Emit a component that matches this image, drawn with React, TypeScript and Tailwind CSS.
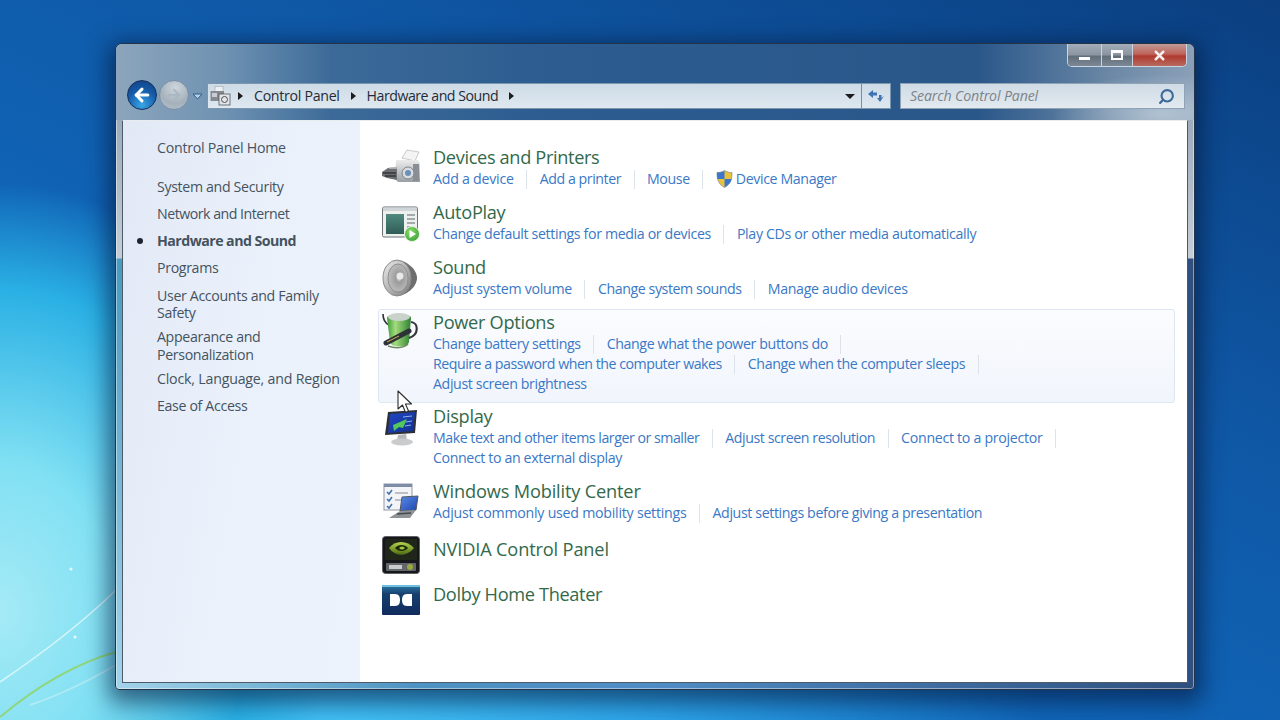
import { ArrowLeft, ArrowRight, Search, X } from "lucide-react";
import { ReactNode } from "react";

const sans = "font-['Open_Sans','Noto_Sans',sans-serif]";

function DevicesIcon() {
  return (
    <svg width="38" height="36" viewBox="0 0 38 36">
      <defs>
        <linearGradient id="dv1" x1="0" y1="0" x2="0" y2="1">
          <stop offset="0" stopColor="#ececec" />
          <stop offset="1" stopColor="#9a9fa4" />
        </linearGradient>
      </defs>
      <path d="M20 9 L25 1 L37 3 L33 12 Z" fill="#f4f4f4" stroke="#b5b5b5" strokeWidth="0.7" />
      <path d="M14 11 H36 L38 15 V33 H16 L13 30 Z" fill="url(#dv1)" />
      <rect x="31" y="15" width="6" height="17" fill="#8a8f95" />
      <circle cx="26" cy="24" r="6" fill="#d9dcdf" stroke="#80858a" />
      <circle cx="26" cy="24" r="3" fill="#6a8fb8" />
      <path d="M0 23 L6 19 L15 18 V31 L5 29 L0 27 Z" fill="#6c6f73" />
      <path d="M1 24 H14 M3 27 H14" stroke="#35383b" strokeWidth="1.4" />
      <path d="M7 19 H15" stroke="#c4c8cc" strokeWidth="1.4" />
    </svg>
  );
}

function AutoPlayIcon() {
  return (
    <svg width="38" height="36" viewBox="0 0 38 36">
      <defs>
        <linearGradient id="ap1" x1="0" y1="0" x2="0" y2="1">
          <stop offset="0" stopColor="#4f8a80" />
          <stop offset="1" stopColor="#2f5d55" />
        </linearGradient>
        <radialGradient id="ap2" cx="0.4" cy="0.35" r="0.8">
          <stop offset="0" stopColor="#8fdc6a" />
          <stop offset="1" stopColor="#2f9a33" />
        </radialGradient>
      </defs>
      <rect x="0.5" y="1" width="35" height="30" rx="1.5" fill="#eef0ee" stroke="#6d7377" />
      <path d="M1 1.5 H35 V5 H1 Z" fill="#cfd5d8" />
      <rect x="4" y="8" width="18" height="20" fill="url(#ap1)" />
      <path d="M25 9 H33 M25 13 H33 M25 17 H33 M25 21 H29" stroke="#8b9296" strokeWidth="1.6" />
      <circle cx="30" cy="28" r="7.5" fill="url(#ap2)" stroke="#e7f5de" />
      <path d="M27.5 24 L34 28 L27.5 32 Z" fill="#fff" />
    </svg>
  );
}

function SoundIcon() {
  return (
    <svg width="36" height="38" viewBox="0 0 36 38">
      <defs>
        <linearGradient id="sn1" x1="0" y1="0" x2="1" y2="1">
          <stop offset="0" stopColor="#eeeeee" />
          <stop offset="1" stopColor="#7c7c7c" />
        </linearGradient>
        <radialGradient id="sn2" cx="0.55" cy="0.5" r="0.6">
          <stop offset="0" stopColor="#f2f2f2" />
          <stop offset="0.25" stopColor="#9a9a9a" />
          <stop offset="1" stopColor="#c4c4c4" />
        </radialGradient>
      </defs>
      <path d="M14 1 C24 1 35 10 35 19 C35 28 24 37 14 37 Z" fill="#6e6e6e" />
      <ellipse cx="15" cy="19" rx="14" ry="18" fill="url(#sn1)" stroke="#8a8a8a" />
      <ellipse cx="16" cy="19" rx="10" ry="14" fill="url(#sn2)" stroke="#8f8f8f" />
      <circle cx="18" cy="17" r="3.5" fill="#e9e9e9" />
    </svg>
  );
}

function PowerIcon() {
  return (
    <svg width="37" height="39" viewBox="0 0 37 39">
      <defs>
        <linearGradient id="pw1" x1="0" y1="0" x2="1" y2="0">
          <stop offset="0" stopColor="#3f9a3c" />
          <stop offset="0.35" stopColor="#a3dc7c" />
          <stop offset="1" stopColor="#2f7f34" />
        </linearGradient>
      </defs>
      <path d="M1 3 C1 8 3 12 7 14" fill="none" stroke="#2f3336" strokeWidth="1.6" />
      <path d="M5 7 C5 2 29 2 29 7 L27 31 C26 37 9 37 8 31 Z" fill="url(#pw1)" />
      <ellipse cx="17" cy="6" rx="11" ry="4" fill="#c9d2cb" />
      <path d="M29 11 C37 12 37 24 27 27" fill="none" stroke="#34383b" strokeWidth="2.2" />
      <path d="M4 32 L27 20" stroke="#2e3236" strokeWidth="5" strokeLinecap="round" />
      <path d="M5 31 L17 25" stroke="#d0b060" strokeWidth="1" />
      <path d="M6 35 C14 38 22 37 26 33" fill="none" stroke="#6c8a5f" strokeWidth="1.4" />
    </svg>
  );
}

function DisplayIcon() {
  return (
    <svg width="33" height="37" viewBox="0 0 33 37">
      <defs>
        <linearGradient id="ds1" x1="0" y1="0" x2="1" y2="1">
          <stop offset="0" stopColor="#2146c4" />
          <stop offset="1" stopColor="#123090" />
        </linearGradient>
      </defs>
      <path d="M3 3 L32 1 L30 24 L0 26 Z" fill="#2c3036" />
      <path d="M5 5 L30 3 L28 22 L3 24 Z" fill="url(#ds1)" />
      <path d="M8 16 L22 10 L18 19 L14 18 L9 22 Z" fill="#53c85a" />
      <path d="M18 8 L27 7 M21 13 L27 12 M20 17 L26 16" stroke="#8eb2ec" strokeWidth="1" />
      <path d="M13 26 L21 25 L22 31 L12 31 Z" fill="#b6b9bc" />
      <ellipse cx="17" cy="33" rx="11" ry="3.5" fill="#c9cbcd" />
    </svg>
  );
}

function MobilityIcon() {
  return (
    <svg width="36" height="38" viewBox="0 0 36 38">
      <defs>
        <linearGradient id="mb1" x1="0" y1="0" x2="1" y2="1">
          <stop offset="0" stopColor="#5c8be6" />
          <stop offset="1" stopColor="#1c46b0" />
        </linearGradient>
      </defs>
      <rect x="1" y="2" width="28" height="26" fill="#f3f4f8" stroke="#9097a8" />
      <rect x="1" y="2" width="28" height="3" fill="#7e8ca8" />
      <path d="M4 10 L6 12 L9 8 M4 17 L6 19 L9 15 M4 24 L6 26 L9 22" fill="none" stroke="#3c6fb0" strokeWidth="1.5" />
      <path d="M12 11 H25 M12 18 H18" stroke="#a9afb8" strokeWidth="1.4" />
      <path d="M19 15 L35 14 L33 28 L17 29 Z" fill="url(#mb1)" stroke="#52565c" />
      <path d="M17 29 L33 28 L27 36 L6 36 Z" fill="#8f9397" />
      <path d="M14 32 L28 31" stroke="#46494c" strokeWidth="1.5" />
    </svg>
  );
}

function NvidiaIcon() {
  return (
    <svg width="38" height="38" viewBox="0 0 38 38">
      <defs>
        <linearGradient id="nv1" x1="0" y1="0" x2="0" y2="1">
          <stop offset="0" stopColor="#b5d64a" />
          <stop offset="1" stopColor="#4c6a12" />
        </linearGradient>
      </defs>
      <rect x="0.5" y="0.5" width="37" height="37" rx="3" fill="#15171a" stroke="#5d6064" />
      <rect x="3" y="3" width="32" height="21" fill="#20261a" />
      <path d="M7 12 C13 4 25 4 32 12 C25 21 13 21 7 12 Z" fill="url(#nv1)" />
      <path d="M13 12 C16 8 23 8 26 12 C23 16 16 16 13 12 Z" fill="#1e2a10" />
      <path d="M17 12 C19 10 21 10 23 12 C21 14 19 14 17 12 Z" fill="#a5c83c" />
      <rect x="4" y="27" width="30" height="8" rx="1" fill="#63676b" />
      <rect x="7" y="29" width="13" height="4" fill="#c9cccf" />
      <circle cx="28" cy="31" r="3" fill="#9aa83f" />
    </svg>
  );
}

function DolbyIcon() {
  return (
    <svg width="38" height="30" viewBox="0 0 38 30">
      <defs>
        <linearGradient id="db1" x1="0" y1="0" x2="0" y2="1">
          <stop offset="0" stopColor="#2f79a8" />
          <stop offset="0.3" stopColor="#17406f" />
          <stop offset="1" stopColor="#102a5c" />
        </linearGradient>
      </defs>
      <rect width="38" height="30" rx="1" fill="url(#db1)" />
      <path d="M0 0 H38 V2 H0 Z" fill="#6fc0dc" />
      <path d="M8 9 H13 C17 9 18 12 18 15 C18 18 17 21 13 21 H8 Z" fill="#fff" />
      <path d="M30 9 H25 C21 9 20 12 20 15 C20 18 21 21 25 21 H30 Z" fill="#fff" />
    </svg>
  );
}

function ShieldIcon() {
  return (
    <svg width="17" height="18" viewBox="0 0 17 18">
      <path d="M8.5 0.5 C11 2 13.5 2.6 16 2.6 C16 9 15 14 8.5 17.5 C2 14 1 9 1 2.6 C3.5 2.6 6 2 8.5 0.5 Z" fill="#e8c33a" stroke="#6c7a96" strokeWidth="0.6" />
      <path d="M8.5 1 V9 H1.4 C1.2 7 1 5 1 2.6 C3.5 2.6 6 2 8.5 1 Z" fill="#3c76cc" />
      <path d="M8.5 9 V17.2 C12.5 15 15 12.5 15.6 9 Z" fill="#3c76cc" />
    </svg>
  );
}

function ExplorerIcon() {
  return (
    <svg width="22" height="20" viewBox="0 0 22 20">
      <rect x="5" y="0.5" width="8" height="7" fill="#eef1f4" stroke="#a9b0b8" strokeWidth="0.7" />
      <path d="M0.5 5 H14 V15 H0.5 Z" fill="#858a90" />
      <rect x="2" y="7" width="5" height="4" fill="#c9cdd2" />
      <rect x="9" y="8" width="11" height="11" fill="#e3e6e9" stroke="#54585c" strokeWidth="0.8" />
      <circle cx="14.5" cy="13.5" r="3" fill="none" stroke="#4c5054" strokeWidth="1" />
    </svg>
  );
}

function Caret() {
  return <span className="block h-0 w-0 border-y-[4px] border-l-[5px] border-y-transparent border-l-[#1c1c1c]" />;
}

function Cursor() {
  return (
    <svg className="absolute left-[397px] top-[390px]" width="17" height="24" viewBox="0 0 17 24">
      <path d="M1 1 V19 L5.5 15 L8.5 22.5 L11.5 21 L8.5 14 L14.5 14 Z" fill="#fff" stroke="#2c2c2c" strokeWidth="1.1" strokeLinejoin="round" />
    </svg>
  );
}

function Wallpaper() {
  return (
    <svg className="absolute inset-0" width="1280" height="720" viewBox="0 0 1280 720">
      <path d="M0 682 C40 655 80 625 116 590" fill="none" stroke="#e4f9fb" strokeWidth="1.6" opacity="0.8" />
      <path d="M0 717 C30 692 70 665 116 652" fill="none" stroke="#8fd67e" strokeWidth="2" />
      <path d="M30 705 C60 695 90 680 116 665" fill="none" stroke="#d5f3f5" strokeWidth="2" opacity="0.5" />
      <circle cx="71" cy="569" r="1.5" fill="#fff" opacity="0.8" />
      <circle cx="75" cy="637" r="1.5" fill="#fff" opacity="0.8" />
    </svg>
  );
}

function Sep() {
  return <span className="mx-[12.5px] h-[19px] w-px bg-[#dde3ea]" />;
}

type Link = string | [ReactNode, string];

function LinkRow({ links, trailing }: { links: Link[]; trailing?: boolean }) {
  return (
    <div className="flex h-[20px] items-center whitespace-nowrap text-[14.2px] leading-[20px] text-[#3a78c6]">
      {links.map((l, i) => (
        <div key={i} className="flex items-center">
          {i > 0 && <Sep />}
          {typeof l === "string" ? (
            <span className="tracking-[-0.38px]">{l}</span>
          ) : (
            <span className={`flex items-center ${l[1]}`}>{l[0]}</span>
          )}
        </div>
      ))}
      {trailing && <Sep />}
    </div>
  );
}

function Item({
  icon,
  title,
  titleClass = "tracking-[-0.3px]",
  rows,
  className,
  iconClass,
}: {
  icon: ReactNode;
  title: string;
  titleClass?: string;
  rows?: ReactNode;
  className: string;
  iconClass: string;
}) {
  return (
    <div className={`flex rounded-[3px] border px-[3px] pt-[1px] ${className}`}>
      <div className={`w-[51px] shrink-0 ${iconClass}`}>{icon}</div>
      <div>
        <div className={`h-[23px] whitespace-nowrap text-[18.2px] leading-[22px] text-[#33694b] ${titleClass}`}>{title}</div>
        {rows}
      </div>
    </div>
  );
}

const sideItem = "text-[14.2px] leading-[17.5px] text-[#45535f]";

export default function App() {
  return (
    <div className={`relative h-[720px] w-[1280px] overflow-hidden bg-[radial-gradient(ellipse_330px_430px_at_0%_85%,#a5eaf6_0%,#80e0f3_35%,#2ab0e4_75%,transparent_100%),radial-gradient(ellipse_720px_420px_at_25%_105%,#46c6f7_0%,#2ea6ea_45%,transparent_100%),linear-gradient(205deg,#0b3f80_0%,#0f58a6_35%,#1068bc_70%,#1272c4_100%)] pl-[115px] pt-[43px] ${sans}`}>
      <Wallpaper />

      {/* window */}
      <div className="relative flex h-[647px] w-[1080px] flex-col rounded-t-[7px] rounded-b-[4px] border border-[#23344a] bg-[linear-gradient(180deg,#8599ab_0px,#c4ced7_214px,transparent_215px),radial-gradient(ellipse_300px_420px_at_0%_100%,rgba(185,225,245,0.8)_0%,transparent_100%),linear-gradient(90deg,#4a9bc0_0%,#4f8cc6_50%,#2e4f7f_100%)] shadow-[0_6px_22px_7px_rgba(5,25,60,0.6),inset_0_0_0_1px_rgba(255,255,255,0.45)]">
        <div className="rounded-t-[6px] bg-[radial-gradient(ellipse_110px_40px_at_97%_92%,rgba(190,205,218,0.8)_0%,transparent_100%),linear-gradient(90deg,#8ca5bc_0%,#6f92b2_10%,#3c6a98_20%,#2c5c90_40%,#2a578a_80%,#6a87a5_92%,#8ba0b8_100%)]">
          {/* caption buttons */}
          <div className="flex h-[23px] justify-end pr-[7px]">
            <div className="flex h-[23px] overflow-hidden rounded-b-[5px] border border-t-0 border-[#c9d6e2]">
              <div className="flex w-[33px] items-center justify-center bg-[linear-gradient(180deg,#a3aebb_0%,#8b949f_50%,#626d7a_55%,#7d8896_100%)]">
                <span className="mt-[7px] h-[3px] w-[11px] bg-white" />
              </div>
              <div className="flex w-[31px] items-center justify-center border-l border-[#c9d6e2] bg-[linear-gradient(180deg,#a3aebb_0%,#8b949f_50%,#626d7a_55%,#7d8896_100%)]">
                <span className="h-[10px] w-[12px] border-2 border-t-[3px] border-white" />
              </div>
              <div className="flex w-[54px] items-center justify-center border-l border-[#c9d6e2] bg-[linear-gradient(180deg,#c09a96_0%,#c0645c_45%,#b03a30_55%,#b86a5e_100%)]">
                <X size={15} strokeWidth={4} color="#f1eeee" />
              </div>
            </div>
          </div>

          {/* nav row */}
          <div className="flex h-[53px] items-start pl-[11px] pr-[9px] pt-[16px]">
            <div className="-mt-[3px] flex h-[30px] w-[30px] items-center justify-center rounded-full border border-[#16305c] bg-[radial-gradient(circle_at_50%_85%,#39a6e6_0%,#155aa8_55%,#0f3f80_100%)]">
              <ArrowLeft size={20} strokeWidth={3.6} color="#fff" />
            </div>
            <div className="-mt-[3px] ml-[2px] flex h-[30px] w-[30px] items-center justify-center rounded-full border border-[#7d90a4] bg-[radial-gradient(circle_at_55%_25%,#cfd7de_0%,#a4b0bb_60%,#bcc6ce_100%)]">
              <ArrowRight size={18} strokeWidth={3} color="#abb7c1" />
            </div>
            <svg className="ml-[3px] mt-[10px]" width="11" height="7" viewBox="0 0 11 7">
              <path d="M1 1 H10 L5.5 6 Z" fill="#b9d0e2" stroke="#2d5c8c" strokeWidth="1" strokeLinejoin="round" />
            </svg>
            <div className="ml-[4px] flex h-[26px] w-[684px] items-center border border-[#7b97ad] bg-[linear-gradient(180deg,#cddbe6,#dfe8f0)]">
              <div className="ml-[2px] flex w-[28px] shrink-0"><ExplorerIcon /></div>
              <Caret />
              <span className="ml-[11px] text-[14.2px] tracking-[-0.3px] text-[#1f2b36]">Control Panel</span>
              <span className="ml-[11px]"><Caret /></span>
              <span className="ml-[11px] text-[14.2px] tracking-[-0.5px] text-[#1f2b36]">Hardware and Sound</span>
              <span className="ml-[11px]"><Caret /></span>
              <span className="ml-auto mr-[6px] h-0 w-0 border-x-[5px] border-t-[5px] border-x-transparent border-t-[#1c1c1c]" />
              <div className="flex h-full w-[29px] items-center justify-center border-l border-[#7b8d9c]">
                <svg width="18" height="14" viewBox="0 0 18 14">
                  <path d="M1 5 L6 1 V3.5 H10 V6.5 H6 V9 Z" fill="#3f74b4" />
                  <path d="M17 7 L13 13 L10 9 H12 V6 H14.5 V9 Z" fill="#3f74b4" />
                </svg>
              </div>
            </div>
            <div className="ml-[9px] flex h-[26px] w-[285px] items-center justify-between border border-[#8fa3b4] bg-[linear-gradient(180deg,#cfdbe5,#e3eaf0)] px-[9px]">
              <span className="text-[14.2px] italic tracking-[-0.15px] text-[#7d848a]">Search Control Panel</span>
              <Search size={17} strokeWidth={3} color="#3d6a9a" className="-scale-x-100" />
            </div>
          </div>
        </div>

        {/* client */}
        <div className="mx-[6px] mb-[6px] flex min-h-0 flex-1 border border-[#4d5a68] border-t-[#e8ecef] bg-white">
          <div className="flex w-[237px] shrink-0 flex-col bg-[linear-gradient(100deg,#e2e9f6_0%,#eaf1fb_50%,#edf3fc_100%)] pl-[34px] pt-[18px] pr-[14px]">
            <div className={`${sideItem} tracking-[-0.25px]`}>Control Panel Home</div>
            <div className={`${sideItem} mt-[21.5px] tracking-[-0.35px]`}>System and Security</div>
            <div className={`${sideItem} mt-[9.5px] tracking-[-0.5px]`}>Network and Internet</div>
            <div className={`relative ${sideItem} mt-[9.5px] font-bold tracking-[-0.55px] text-[#26323c]`}>
              <span className="absolute -left-[20px] top-[6px] h-[6px] w-[6px] rounded-full bg-[#1b2530]" />
              Hardware and Sound
            </div>
            <div className={`${sideItem} mt-[9.5px] tracking-[-0.35px]`}>Programs</div>
            <div className={`${sideItem} mt-[10px] tracking-[-0.35px]`}>User Accounts and Family Safety</div>
            <div className={`${sideItem} mt-[6.5px] tracking-[-0.35px]`}>Appearance and Personalization</div>
            <div className={`${sideItem} mt-[6.5px] tracking-[-0.2px]`}>Clock, Language, and Region</div>
            <div className={`${sideItem} mt-[9.5px] tracking-[-0.35px]`}>Ease of Access</div>
          </div>

          <div className="flex min-w-0 flex-1 flex-col pl-[18px] pr-[12px] pt-[23px]">
            <Item
              className="border-transparent"
              iconClass="pt-[3px]"
              icon={<DevicesIcon />}
              title="Devices and Printers"
              titleClass="tracking-[-0.35px]"
              rows={
                <LinkRow
                  links={[
                    ["Add a device", "tracking-[-0.25px]"],
                    ["Add a printer", "tracking-[-0.45px]"],
                    ["Mouse", "tracking-[-0.4px]"],
                    [
                      <>
                        <span className="mr-[3px]"><ShieldIcon /></span>Device Manager
                      </>,
                      "tracking-[-0.38px]",
                    ],
                  ]}
                />
              }
            />
            <Item
              className="mt-[9px] border-transparent"
              iconClass="pt-[5px]"
              icon={<AutoPlayIcon />}
              title="AutoPlay"
              rows={
                <LinkRow
                  links={[
                    ["Change default settings for media or devices", "tracking-[-0.36px]"],
                    ["Play CDs or other media automatically", "tracking-[-0.34px]"],
                  ]}
                />
              }
            />
            <Item
              className="mt-[9px] border-transparent"
              iconClass="pt-[3px]"
              icon={<SoundIcon />}
              title="Sound"
              rows={
                <LinkRow
                  links={[
                    ["Adjust system volume", "tracking-[-0.3px]"],
                    ["Change system sounds", "tracking-[-0.42px]"],
                    ["Manage audio devices", "tracking-[-0.33px]"],
                  ]}
                />
              }
            />
            <Item
              className="mt-[9px] border-[#dde6f2] bg-[linear-gradient(180deg,#fbfcfe,#f1f5fc)] pb-[8px]"
              iconClass=""
              icon={<PowerIcon />}
              title="Power Options"
              rows={
                <>
                  <LinkRow trailing links={["Change battery settings", "Change what the power buttons do"]} />
                  <LinkRow
                    trailing
                    links={[["Require a password when the computer wakes", "tracking-[-0.49px]"], "Change when the computer sleeps"]}
                  />
                  <LinkRow links={["Adjust screen brightness"]} />
                </>
              }
            />
            <Item
              className="border-transparent"
              iconClass="pt-[4px] pl-[3px]"
              icon={<DisplayIcon />}
              title="Display"
              rows={
                <>
                  <LinkRow
                    trailing
                    links={[
                      ["Make text and other items larger or smaller", "tracking-[-0.48px]"],
                      ["Adjust screen resolution", "tracking-[-0.44px]"],
                      ["Connect to a projector", "tracking-[-0.3px]"],
                    ]}
                  />
                  <LinkRow links={["Connect to an external display"]} />
                </>
              }
            />
            <Item
              className="mt-[9px] border-transparent"
              iconClass="pt-[2px] pl-[1px]"
              icon={<MobilityIcon />}
              title="Windows Mobility Center"
              titleClass="tracking-[-0.17px]"
              rows={
                <LinkRow
                  links={[["Adjust commonly used mobility settings", "tracking-[-0.25px]"], "Adjust settings before giving a presentation"]}
                />
              }
            />
            <Item
              className="mt-[12px] border-transparent"
              iconClass="-mt-[2px]"
              icon={<NvidiaIcon />}
              title="NVIDIA Control Panel"
              titleClass="tracking-[-0.15px]"
            />
            <Item
              className="mt-[6px] border-transparent"
              iconClass="pt-[2px]"
              icon={<DolbyIcon />}
              title="Dolby Home Theater"
              titleClass="tracking-[-0.35px]"
            />
          </div>
        </div>
      </div>

      <Cursor />
    </div>
  );
}
